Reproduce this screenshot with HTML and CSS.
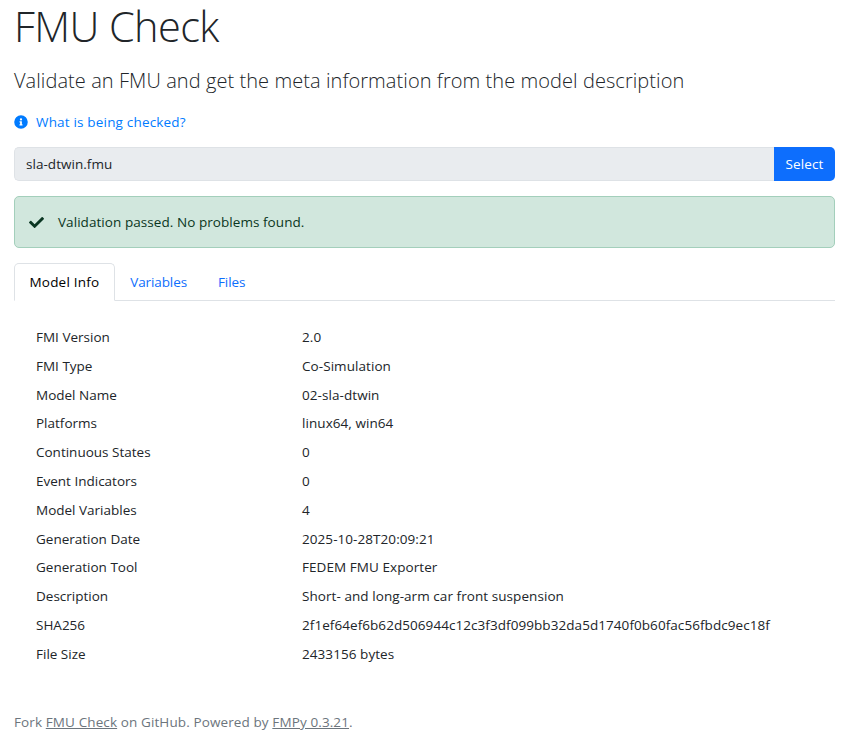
FILE: index.html
```html
<!DOCTYPE html>
<html lang="en">
<head>
<meta charset="utf-8">
<title>FMU Check</title>
<link rel="stylesheet" href="styles.css">
</head>
<body>
<main class="container">
  <h1>FMU Check</h1>
  <p class="lead">Validate an FMU and get the meta information from the model description</p>
  <a class="help" href="#"><svg viewBox="0 0 512 512" width="14" height="14"><path fill="currentColor" d="M256 8a248 248 0 1 0 0 496 248 248 0 0 0 0-496zm0 110a42 42 0 1 1 0 84 42 42 0 0 1 0-84zm56 254a12 12 0 0 1-12 12h-88a12 12 0 0 1-12-12v-24a12 12 0 0 1 12-12h12v-64h-12a12 12 0 0 1-12-12v-24a12 12 0 0 1 12-12h64a12 12 0 0 1 12 12v100h12a12 12 0 0 1 12 12z"/></svg><span>What is being checked?</span></a>
  <div class="input-group"><div class="field">sla-dtwin.fmu</div><button type="button">Select</button></div>
  <div class="alert"><svg viewBox="0 0 512 512" width="15" height="15"><path fill="currentColor" d="M173.900 439.400l-166.400-166.400c-10-10-10-26.200 0-36.200l36.200-36.200c10-10 26.200-10 36.200 0L192 312.690 432.100 72.600c10-10 26.200-10 36.200 0l36.200 36.200c10 10 10 26.200 0 36.200l-294.400 294.400c-10 10-26.200 10-36.200 0z"/></svg><span>Validation passed. No problems found.</span></div>
  <nav class="tabs"><a class="active" href="#">Model Info</a><a href="#">Variables</a><a href="#">Files</a></nav>
  <dl class="info">
    <dt>FMI Version</dt><dd>2.0</dd>
    <dt>FMI Type</dt><dd>Co-Simulation</dd>
    <dt>Model Name</dt><dd>02-sla-dtwin</dd>
    <dt>Platforms</dt><dd>linux64, win64</dd>
    <dt>Continuous States</dt><dd>0</dd>
    <dt>Event Indicators</dt><dd>0</dd>
    <dt>Model Variables</dt><dd>4</dd>
    <dt>Generation Date</dt><dd>2025-10-28T20:09:21</dd>
    <dt>Generation Tool</dt><dd>FEDEM FMU Exporter</dd>
    <dt>Description</dt><dd>Short- and long-arm car front suspension</dd>
    <dt>SHA256</dt><dd>2f1ef64ef6b62d506944c12c3f3df099bb32da5d1740f0b60fac56fbdc9ec18f</dd>
    <dt>File Size</dt><dd>2433156 bytes</dd>
  </dl>
  <footer>Fork <a href="#">FMU Check</a> on GitHub. Powered by <a href="#">FMPy 0.3.21</a>.</footer>
</main>
</body>
</html>
```
FILE: styles.css
```css
* { box-sizing: border-box; }
body { margin: 0; background: #fff; color: #212529; font: 13.5px/22px "Segoe UI", "Open Sans", "Noto Sans", sans-serif; }
a { color: #007bff; text-decoration: none; }
.container { padding: 0 16px 0 14px; }
h1 { margin: 0; font-size: 41.5px; line-height: 52px; font-weight: 300; letter-spacing: -.6px; }
.lead { margin: 15px 0 0; font-size: 20px; line-height: 28px; font-weight: 300; letter-spacing: .07px; white-space: nowrap; }
.help { display: flex; align-items: center; gap: 8px; margin-top: 16px; height: 22px; letter-spacing: .18px; }
.input-group { display: flex; height: 34px; margin-top: 14px; }
.field { flex: 1; padding: 5px 11px; background: #e9ecef; border: 1px solid #dee2e6; border-right: 0; border-radius: 5px 0 0 5px; letter-spacing: .04px; }
button { width: 61px; padding: 0; border: 0; border-radius: 0 5px 5px 0; background: #0d6efd; color: #fff; font: inherit; letter-spacing: .15px; }
.alert { display: flex; align-items: center; gap: 14px; height: 52px; margin-top: 15px; padding: 0 14px; color: #0a3622; background: #d1e7dd; border: 1px solid #a3cfbb; border-radius: 5px; letter-spacing: .06px; }
.tabs { display: flex; height: 38px; margin-top: 15px; border-bottom: 1px solid #dee2e6; }
.tabs a { height: 38px; padding: 7px 14.5px; border: 1px solid transparent; color: #0d6efd; letter-spacing: -.1px; white-space: nowrap; }
.tabs .active { color: #000; background: #fff; border-color: #dee2e6 #dee2e6 #fff; border-radius: 5px 5px 0 0; letter-spacing: .2px; }
.info { display: grid; grid-template-columns: 266px 1fr; grid-auto-rows: 28.8px; align-items: center; margin: 21.6px 0 0 22px; }
dt, dd { margin: 0; white-space: nowrap; }
dd { letter-spacing: .065px; }
footer { margin-top: 43.2px; color: #6c757d; letter-spacing: .11px; }
footer a { color: inherit; text-decoration: underline; }
```
